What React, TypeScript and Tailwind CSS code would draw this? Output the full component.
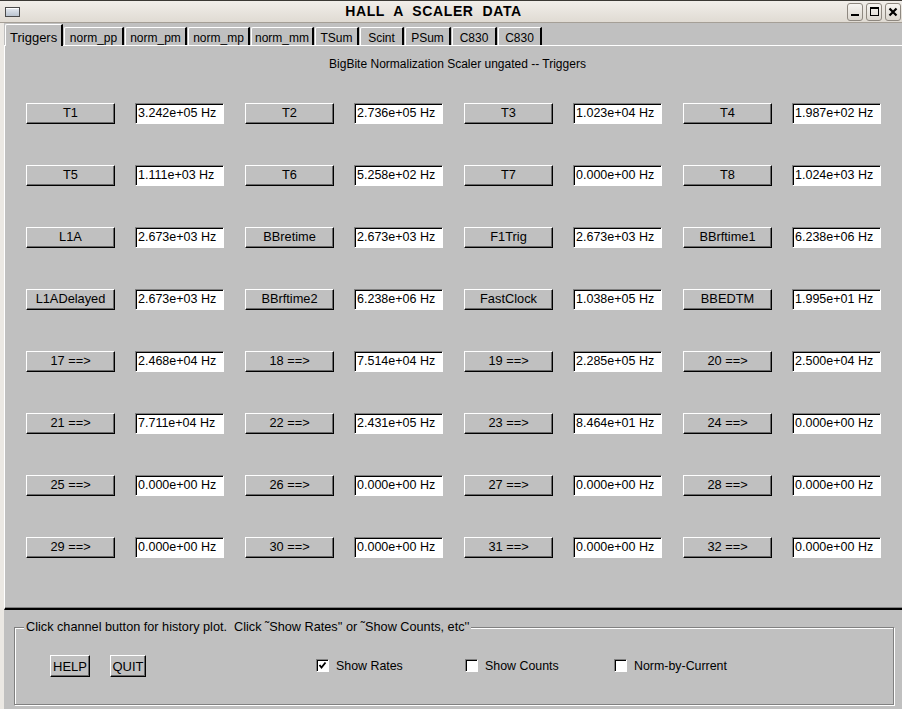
import React from "react";

const tabs = [
    { name: "Triggers", w: "w-[58px]", active: true },
    { name: "norm_pp", w: "w-[60px]" },
    { name: "norm_pm", w: "w-[62px]" },
    { name: "norm_mp", w: "w-[62px]" },
    { name: "norm_mm", w: "w-[63px]" },
    { name: "TSum", w: "w-[44px]" },
    { name: "Scint", w: "w-[44px]" },
    { name: "PSum", w: "w-[46px]" },
    { name: "C830", w: "w-[45px]" },
    { name: "C830", w: "w-[44px]" },
];

const zero = "0.000e+00 Hz";

const rows: [string, string][][] = [
    [["T1", "3.242e+05 Hz"], ["T2", "2.736e+05 Hz"], ["T3", "1.023e+04 Hz"], ["T4", "1.987e+02 Hz"]],
    [["T5", "1.111e+03 Hz"], ["T6", "5.258e+02 Hz"], ["T7", "0.000e+00 Hz"], ["T8", "1.024e+03 Hz"]],
    [["L1A", "2.673e+03 Hz"], ["BBretime", "2.673e+03 Hz"], ["F1Trig", "2.673e+03 Hz"], ["BBrftime1", "6.238e+06 Hz"]],
    [["L1ADelayed", "2.673e+03 Hz"], ["BBrftime2", "6.238e+06 Hz"], ["FastClock", "1.038e+05 Hz"], ["BBEDTM", "1.995e+01 Hz"]],
    [["17 ==>", "2.468e+04 Hz"], ["18 ==>", "7.514e+04 Hz"], ["19 ==>", "2.285e+05 Hz"], ["20 ==>", "2.500e+04 Hz"]],
    [["21 ==>", "7.711e+04 Hz"], ["22 ==>", "2.431e+05 Hz"], ["23 ==>", "8.464e+01 Hz"], ["24 ==>", zero]],
    [["25 ==>", zero], ["26 ==>", zero], ["27 ==>", zero], ["28 ==>", zero]],
    [["29 ==>", zero], ["30 ==>", zero], ["31 ==>", zero], ["32 ==>", zero]],
];

function TkButton({ label, className }: { label: string; className: string }) {
    return (
        <button
            className={
                "flex items-center justify-center bg-[#c0c0c0] border border-t-white border-l-white border-r-black border-b-black shadow-[inset_-1px_-1px_0_#6a6a6a] leading-none text-black " +
                className
            }
        >
            {label}
        </button>
    );
}

function Checkbox({ label, checked }: { label: string; checked?: boolean }) {
    return (
        <div className="w-[149px] flex items-center gap-[7px]">
            <div className="w-[13px] h-[13px] bg-white border border-t-[#808080] border-l-[#808080] border-r-white border-b-white shadow-[inset_1px_1px_0_#000] flex items-center justify-center">
                {checked && (
                    <svg width="9" height="9" viewBox="0 0 9 9">
                        <path d="M1.5 4 L3.5 6.5 L7.5 1.5" stroke="#000" strokeWidth="1.8" fill="none" />
                    </svg>
                )}
            </div>
            <span className="text-[12.4px] text-black">{label}</span>
        </div>
    );
}

function TitleBtn({ children }: { children: React.ReactNode }) {
    return (
        <div className="w-[16px] h-[18px] rounded-[3px] border border-[#8e8880] bg-gradient-to-b from-[#f7f5f2] to-[#dcd7cf] flex items-center justify-center">
            {children}
        </div>
    );
}

export default function App() {
    return (
        <div className="w-[902px] h-[709px] overflow-hidden bg-[#ebe8e3] flex flex-col font-['Liberation_Sans',Arial,sans-serif] text-black">
            {/* Title bar */}
            <div className="h-[23px] shrink-0 flex items-center border-t border-t-[#3a3834] border-b border-b-[#a59f96] bg-gradient-to-b from-[#f1eeea] to-[#e0dbd3]">
                <div className="ml-[5px] w-[15px] h-[10px] border border-[#4a4a4a] bg-gradient-to-b from-[#e8ecf2] to-[#b9c3cf] shadow-[inset_0_1px_0_#fff]" />
                <div className="flex-1 text-center font-bold text-[14px] whitespace-pre tracking-[0.6px]">
                    {"HALL  A  SCALER  DATA"}
                </div>
                <div className="flex items-center gap-[3px] mr-[1px]">
                    <TitleBtn>
                        <div className="w-[8px] h-[2px] bg-black mt-[7px]" />
                    </TitleBtn>
                    <TitleBtn>
                        <div className="w-[9px] h-[9px] border border-black border-t-2" />
                    </TitleBtn>
                    <TitleBtn>
                        <svg width="10" height="10" viewBox="0 0 10 10">
                            <path d="M1.5 1.5 L8.5 8.5 M8.5 1.5 L1.5 8.5" stroke="#000" strokeWidth="2.2" />
                        </svg>
                    </TitleBtn>
                </div>
            </div>

            <div className="flex-1 flex">
                <div className="w-[4px] shrink-0" />
                <div className="flex-1 bg-[#c0c0c0] flex flex-col">
                    {/* Tabs */}
                    <div className="h-[22px] flex items-end pl-[1px]">
                        {tabs.map((t, i) =>
                            t.active ? (
                                <div
                                    key={i}
                                    className={
                                        "relative z-10 h-[22px] -mb-[1px] bg-[#c0c0c0] border-t border-l border-t-white border-l-white border-r-2 border-r-black rounded-tl-[2px] flex items-start pt-[3px] pl-[4px] text-[13px] " +
                                        t.w
                                    }
                                >
                                    {t.name}
                                </div>
                            ) : (
                                <div
                                    key={i}
                                    className={
                                        "h-[18px] ml-[1px] bg-[#c0c0c0] border-t border-l border-t-white border-l-white border-r-2 border-r-black rounded-tl-[2px] flex items-center justify-center pt-[2px] text-[12px] whitespace-nowrap " +
                                        t.w
                                    }
                                >
                                    {t.name}
                                </div>
                            )
                        )}
                    </div>

                    {/* Tab frame */}
                    <div className="h-[565px] shrink-0 border-t border-t-white border-l border-l-white border-b-2 border-b-black shadow-[inset_0_-1px_0_#808080] flex flex-col">
                        <div className="pt-[11px] pl-[8px] h-[25px] text-center text-[12px] leading-[14px]">
                            BigBite Normalization Scaler ungated -- Triggers
                        </div>
                        <div className="mt-[32px] flex flex-col gap-[41px] pl-[21px]">
                            {rows.map((row, r) => (
                                <div key={r} className="flex gap-[21px] h-[21px]">
                                    {row.map(([label, value], c) => (
                                        <div key={c} className="flex gap-[20px]">
                                            <TkButton label={label} className="w-[89px] h-[21px] text-[12.8px]" />
                                            <div className="w-[89px] h-[21px] bg-white border border-t-[#808080] border-l-[#808080] border-r-white border-b-white shadow-[inset_1px_1px_0_#000] flex items-center pl-[2px] text-[12.5px] leading-none whitespace-nowrap">
                                                {value}
                                            </div>
                                        </div>
                                    ))}
                                </div>
                            ))}
                        </div>
                    </div>

                    {/* Bottom panel */}
                    <div className="flex-1">
                        <div className="relative mt-[17px] ml-[10px] w-[880px] h-[78px] border border-[#808080] shadow-[inset_1px_1px_0_#fff,1px_1px_0_#fff]">
                            <span className="absolute -top-[8px] left-[9px] px-[2px] bg-[#c0c0c0] text-[12.7px] leading-[14px] whitespace-pre">
                                {"Click channel button for history plot.  Click \u02DCShow Rates'' or \u02DCShow Counts, etc''"}
                            </span>
                            <div className="pt-[27px] pl-[35px] flex items-center">
                                <TkButton label="HELP" className="w-[40px] h-[22px] text-[13px]" />
                                <TkButton label="QUIT" className="w-[36px] h-[22px] ml-[20px] text-[13px]" />
                                <div className="ml-[170px] flex items-center">
                                    <Checkbox label="Show Rates" checked />
                                    <Checkbox label="Show Counts" />
                                    <Checkbox label="Norm-by-Current" />
                                </div>
                            </div>
                        </div>
                    </div>
                </div>
            </div>
        </div>
    );
}
